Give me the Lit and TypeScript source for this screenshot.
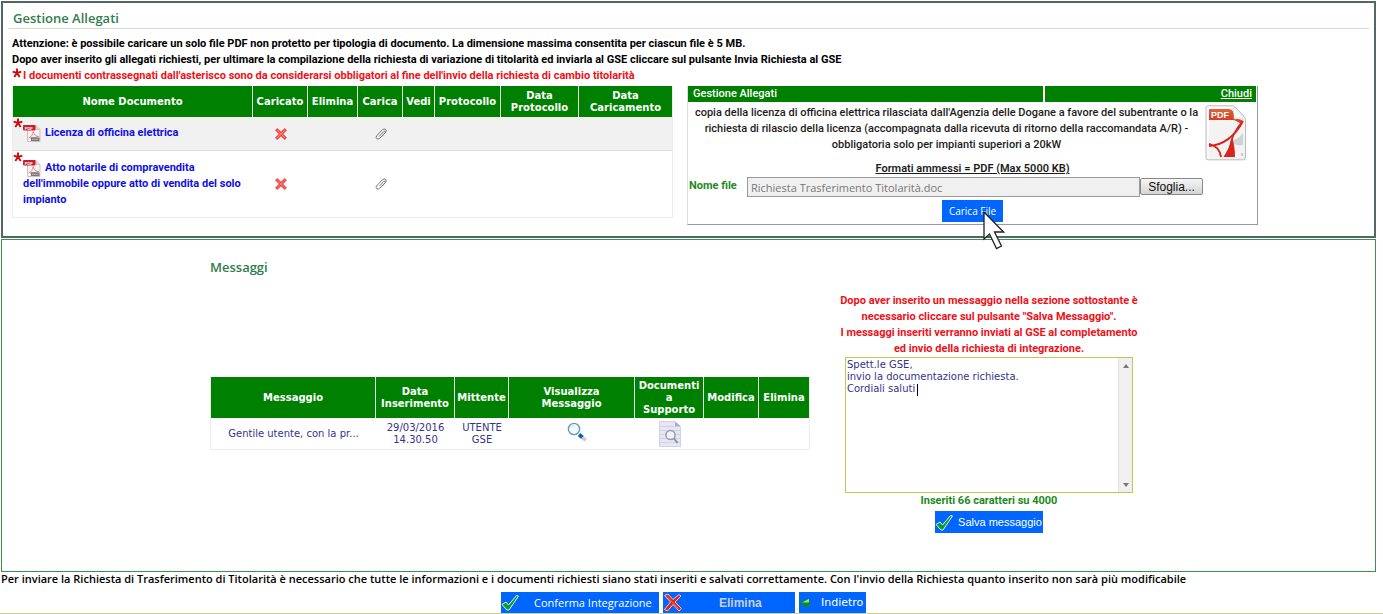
import { LitElement, html, css, svg } from "lit";
import { customElement, property, state } from "lit/decorators.js";

interface Documento {
  nome: string;
}

const star = html`<svg class="star" width="10" height="10" viewBox="0 0 10 10" role="img" aria-label="obbligatorio">
  <path d="M5 5V.5M5 5L.7 3.700M5 5L9.300 3.700M5 5L2.300 9M5 5L7.700 9" stroke="#cc0a0a" stroke-width="1.900" fill="none" />
</svg>`;

const pdfSmall = html`<svg class="pdf" width="18" height="18" viewBox="0 0 18 18" aria-hidden="true">
  <path d="M4.500 1.500h8.500l4 4v12h-12.500z" fill="#f7f3f3" stroke="#c9c4c4" />
  <path d="M13 1.500v4h4" fill="#ddd" stroke="#bbb" stroke-width=".7" />
  <rect x="0" y="1" width="12.500" height="5.500" rx="1" fill="#c8202a" />
  <text x="1.800" y="5.600" class="pdf-s">PDF</text>
  <path d="M5.500 14c3-1 4.500-4 4.600-6.500c1 3.500 3 5 6 5.200M7 14l8-1" fill="none" stroke="#e0868a" stroke-width="1" />
  <rect x="8" y="13.500" width="8.500" height="3.500" fill="#777" />
  <path d="M9 15.300h6.500" stroke="#ccc" stroke-width="1" stroke-dasharray="1.500 .6" />
</svg>`;

const pdfLarge = html`<svg width="42" height="56" viewBox="0 0 42 56" aria-hidden="true">
  <defs>
    <linearGradient id="pg" x1="0" y1="0" x2="1" y2="1">
      <stop offset="0" stop-color="#fff" /><stop offset="1" stop-color="#eee" />
    </linearGradient>
    <linearGradient id="pr" x1="0" y1="0" x2="0" y2="1">
      <stop offset="0" stop-color="#e2623f" /><stop offset="1" stop-color="#d3401f" />
    </linearGradient>
  </defs>
  <path d="M3 .8h24.500c3 1 11.500 9.500 13 13.500v38.500q0 2-2 2H3q-2 0-2-2V2.800q0-2 2-2z" fill="url(#pg)" stroke="#b9bcbc" />
  <path d="M4 15h26l8 1v36H4z" fill="#f3f3f3" />
  <path d="M24 36c5 4 10 5 14 4V28c-5 6-9 8-14 8z" fill="#cfd2d6" />
  <path d="M4 4h19q5 0 6 5l1 6H4z" fill="url(#pr)" />
  <path d="M28 3c1 5 1 8 1 11c3-2 6-1 9.500 1C37 10 31 4 28 3z" fill="#fff" stroke="#ccc" stroke-width=".6" />
  <path d="M29 15c3-2 6-1 9 1l-2 3-3-2z" fill="#d8432a" />
  <text x="6" y="13" class="pdf-l">PDF</text>
  <path d="M4 41c16-1 26-10 34-25M4 39c8 2 11 6 12 13" fill="none" stroke="#d8231f" stroke-width="2" />
  <path d="M27 32C29 38 30 45 30 52H18.500C23 45 25 40 27 32z" fill="#d8231f" />
  <path d="M37 17C28 27 26 36 25 42" fill="none" stroke="#d8231f" stroke-width="1.500" />
  <path d="M37 48v3" stroke="#e88" stroke-width="1" />
</svg>`;

const cross = html`<svg width="12" height="12" viewBox="0 0 12 12" role="img" aria-label="No">
  <path d="M2.200 0L6 3.600L9.800 0L12 2.200L8.300 6L12 9.800L9.800 12L6 8.400L2.200 12L0 9.800L3.700 6L0 2.200z" fill="#f0504c" />
  <path d="M2.300 2.300l7.400 7.400M9.700 2.300l-7.400 7.400" stroke="#f67b76" stroke-width="1" />
</svg>`;

const clip = html`<svg width="12" height="12" viewBox="0 0 12 12" aria-hidden="true">
  <path d="M4.300 8.300L8.600 3.600q.9-.8 1.500-.2q.6.700-.2 1.600L4.700 10.300q-1.500 1.300-2.900.4q-1.400-1.300-.2-2.800L7.400 1.700q1.700-1.500 3.300-.3q1.200 1.500-.2 3.100L6.500 8.800" fill="none" stroke="#777" stroke-width="1" />
</svg>`;

const lens = html`<svg width="20" height="20" viewBox="0 0 20 20" aria-hidden="true">
  <path d="M12 12.500l3.500 3" stroke="#0f67a8" stroke-width="4" />
  <path d="M15.500 15.500l3 2.700" stroke="#c9bfe6" stroke-width="3.500" />
  <circle cx="7" cy="7" r="5.600" fill="#f4fbfe" stroke="#5f9cb8" stroke-width="1.400" />
  <path d="M3.500 6q1-3 4-3" stroke="#b8dcea" fill="none" />
</svg>`;

const docLens = html`<svg width="22" height="26" viewBox="0 0 22 26" aria-hidden="true">
  <path d="M.5.500h15.500l5.500 5v20H.5z" fill="#e6e7f3" stroke="#d2d3e2" />
  <path d="M16 .5v5h5.500z" fill="#a9abc0" />
  <path d="M1 5.500h14M1 9.500h20M1 13.500h20M1 17.500h20M1 21.500h20" stroke="#cfd1e6" />
  <circle cx="11.500" cy="14" r="4.600" fill="#f1f1f6" stroke="#999aa5" stroke-width="1.500" />
  <path d="M15 17.500l3.500 4.500" stroke="#8d8e99" stroke-width="2" />
</svg>`;

const check = html`<svg width="18" height="17" viewBox="0 0 18 17" aria-hidden="true">
  <path d="M1 10.500l4-2.500l2.500 3L15.500 1.500l2 .5L8 16H6z" fill="#0c9a35" stroke="#d8f5dc" stroke-width="1" />
</svg>`;

const redX = html`<svg width="20" height="19" viewBox="0 0 20 19" aria-hidden="true">
  <path d="M1.500 2.500L5 1l5 5.500L16 1.500l2 1.500l-6 6l6.500 6.500L16 18l-6-6.500L4.500 18l-3-1.500L7.500 9z" fill="#d8251d" stroke="#f8c4be" stroke-width="1" />
  <path d="M4 3.500l11.500 12" stroke="#f3695d" stroke-width="1" />
</svg>`;

const backArrow = html`<svg width="11" height="12" viewBox="0 0 11 12" aria-hidden="true">
  <path d="M10.500 1v10L.5 6.500v-1z" fill="#14852b" />
  <path d="M10 1.800L3 5.500h7z" fill="#8fdf7a" />
</svg>`;

const pointer = html`<svg class="pointer" width="22" height="39" viewBox="0 0 22 39" aria-hidden="true">
  <path d="M1 1v27l5.500-5l7 14.500l5-2.500l-7-14h9z" fill="#fff" stroke="#222" stroke-width="1.300" />
</svg>`;

const shared = css`
  * { box-sizing: border-box; }
  table { border-collapse: separate; border-spacing: 0; table-layout: fixed; width: 100%;
    font: 10px/12px "DejaVu Sans", Verdana, sans-serif; border: 1px solid #ececec; border-top: 0; }
  th { background: #008000; color: #fff; font-weight: bold; padding: 0; border-right: 1px solid #e4f3e4; }
  th:last-child { border-right: 0; }
  td { padding: 0; text-align: center; }
  svg { display: block; }
  .icon { display: inline-flex; border: 0; background: none; padding: 0; vertical-align: middle; }
  h2 { margin: 0; font: 600 13px/18px "Open Sans", "Trebuchet MS", sans-serif; color: #2f7d4a; }
  .blue { display: inline-flex; align-items: center; background: #0066ff; color: #fff; border: 0; padding: 0; white-space: nowrap; }
`;

@customElement("tabella-documenti")
export class TabellaDocumenti extends LitElement {
  @property({ attribute: false }) documenti: Documento[] = [];

  static styles = [shared, css`
    :host { display: block; }
    .c55 { width: 55px; } .c50 { width: 50px; } .c45 { width: 45px; } .c32 { width: 32px; }
    .c66 { width: 66px; } .c78 { width: 78px; } .c93 { width: 93px; }
    th { height: 31px; }
    td { height: 34px; }
    tr:first-child td { background: #f1f1f1; border-bottom: 1px solid #ddd; }
    tr:last-child td { height: 66px; }
    .name { position: relative; text-align: left; padding: 8px 0 9px 10px; color: #1010e6;
      font: 700 11px/16px Roboto, "Trebuchet MS", sans-serif; }
    .name a { color: inherit; text-decoration: none; }
    .star { position: absolute; left: 0; top: 1px; }
    .pdf { display: inline-block; vertical-align: middle; margin: -2px 4px -2px 0; }
    .pdf-s { font: bold 4px "Liberation Sans", sans-serif; fill: #fff; }
  `];

  render() {
    return html`<table>
      <colgroup><col /><col class="c55" /><col class="c50" /><col class="c45" /><col class="c32" /><col class="c66" /><col class="c78" /><col class="c93" /></colgroup>
      <thead><tr>
        <th>Nome Documento</th><th>Caricato</th><th>Elimina</th><th>Carica</th><th>Vedi</th><th>Protocollo</th>
        <th>Data<br />Protocollo</th><th>Data<br />Caricamento</th>
      </tr></thead>
      <tbody>${this.documenti.map((d) => html`<tr>
        <td class="name">${star}${pdfSmall}<a href="#">${d.nome}</a></td>
        <td><span class="icon">${cross}</span></td><td></td>
        <td><button class="icon" aria-label="Carica">${clip}</button></td>
        <td></td><td></td><td></td><td></td>
      </tr>`)}</tbody>
    </table>`;
  }
}

@customElement("carica-allegato")
export class CaricaAllegato extends LitElement {
  static styles = [shared, css`
    :host { display: block; font: 500 11px/16px Roboto, "Trebuchet MS", sans-serif; color: #1c1c1c; }
    .box { position: relative; border: 1px solid #999; border-left-color: #ddd; border-top: 0; padding-bottom: 2px; }
    .bar { display: grid; grid-template-columns: 356fr 212fr; gap: 2px; margin-right: 1px; color: #fff; }
    .bar > * { background: #008000; padding: 0 5px; }
    .bar > :last-child { text-align: right; padding-right: 4px; }
    .bar a { color: #fff; }
    .desc { display: grid; grid-template-columns: 1fr 52px; margin-top: 3px; }
    .desc p { margin: 0; text-align: center; }
    .formats { text-align: center; font-weight: 600; text-decoration: underline; }
    .file { display: grid; grid-template-columns: 59px 393px 63px; align-items: start; }
    label { color: #1d8a1d; font-weight: 700; padding: 1px 0 0 1px; }
    input { height: 20px; min-width: 0; border: 1px solid #999; background: #f0f0f0; color: #777; padding: 0 3px;
      font: 11px/16px "Open Sans", Tahoma, sans-serif; }
    .browse { height: 17px; margin-top: 1px; border: 1px solid #888; border-radius: 2px; padding: 0;
      background: linear-gradient(#f6f6f6, #d4d4d4); color: #111; font: 12px/14px "Liberation Sans", Arial, sans-serif; }
    .send { display: flex; justify-content: center; margin-top: 3px; }
    .send button { height: 22px; padding: 0 7px; font: 10px/16px "Open Sans", sans-serif; }
    .pdf-l { font: bold 9px "Liberation Sans", sans-serif; fill: #fff; }
    .pointer { position: absolute; left: 295px; top: 125px; }
  `];

  render() {
    return html`<section class="box">
      <div class="bar"><span>Gestione Allegati</span><span><a href="#">Chiudi</a></span></div>
      <div class="desc">
        <p>copia della licenza di officina elettrica rilasciata dall'Agenzia delle Dogane a favore del subentrante o la<br />
        richiesta di rilascio della licenza (accompagnata dalla ricevuta di ritorno della raccomandata A/R) -<br />
        obbligatoria solo per impianti superiori a 20kW</p>
        ${pdfLarge}
      </div>
      <div class="formats">Formati ammessi = PDF (Max 5000 KB)</div>
      <div class="file">
        <label for="nome">Nome file</label>
        <input id="nome" type="text" readonly value="Richiesta Trasferimento Titolarità.doc" />
        <button class="browse">Sfoglia...</button>
      </div>
      <div class="send"><button class="blue">Carica File</button></div>
      ${pointer}
    </section>`;
  }
}

@customElement("pannello-messaggi")
export class PannelloMessaggi extends LitElement {
  @state() private testo = "Spett.le GSE,\ninvio la documentazione richiesta.\nCordiali saluti";

  static styles = [shared, css`
    :host { display: grid; grid-template-columns: 600px 304px; gap: 27px; padding: 18px 0 38px 208px; }
    h2 { margin-bottom: 101px; }
    .c165 { width: 165px; } .c79 { width: 79px; } .c54 { width: 54px; } .c126 { width: 126px; }
    .c69 { width: 69px; } .c55 { width: 55px; }
    th { height: 41px; }
    td { height: 31px; color: #34348a; }
    .view { padding: 0 0 3px 10px; }
    .compose { display: flex; flex-direction: column; align-items: center; padding-top: 35px;
      font: 700 11px/16px Roboto, "Trebuchet MS", sans-serif; }
    .note { margin: 0; text-align: center; color: #f01018; white-space: nowrap; }
    .editor { position: relative; display: flex; width: 288px; height: 136px; border: 1px solid #c5c552; }
    textarea { flex: 1; border: 0; outline: 0; resize: none; overflow: hidden; padding: 1px; color: #34348a;
      font: 10px/12px "DejaVu Sans", Verdana, sans-serif; background: #fff; }
    .caret { position: absolute; left: 71px; top: 26px; width: 1px; height: 12px; background: #000; }
    .scroll { display: flex; flex-direction: column; justify-content: space-between; align-items: center; width: 14px;
      padding: 6px 0 5px; background: #f0f0f0; border-left: 1px solid #e2e2e2; }
    .count { color: #1d8a1d; }
    .save { height: 22px; padding-right: 1px; margin-top: 2px; font: 11px/16px "Liberation Sans", Arial, sans-serif; gap: 5px; }
  `];

  private scrive(e: Event) {
    this.testo = (e.target as HTMLTextAreaElement).value;
  }

  render() {
    const arrow = (d: string) => html`<svg width="6" height="4" viewBox="0 0 6 4" aria-hidden="true">${svg`<path d=${d} fill="#777"/>`}</svg>`;
    return html`
      <div>
        <h2>Messaggi</h2>
        <table>
          <colgroup><col class="c165" /><col class="c79" /><col class="c54" /><col class="c126" /><col class="c69" /><col class="c55" /><col /></colgroup>
          <thead><tr>
            <th>Messaggio</th><th>Data<br />Inserimento</th><th>Mittente</th><th>Visualizza<br />Messaggio</th>
            <th>Documenti<br />a<br />Supporto</th><th>Modifica</th><th>Elimina</th>
          </tr></thead>
          <tbody><tr>
            <td>Gentile utente, con la pr...</td><td>29/03/2016<br />14.30.50</td><td>UTENTE<br />GSE</td>
            <td class="view"><button class="icon" aria-label="Visualizza messaggio">${lens}</button></td>
            <td><button class="icon" aria-label="Documenti a supporto">${docLens}</button></td><td></td><td></td>
          </tr></tbody>
        </table>
      </div>
      <div class="compose">
        <p class="note">Dopo aver inserito un messaggio nella sezione sottostante è<br />
          necessario cliccare sul pulsante "Salva Messaggio".<br />
          I messaggi inseriti verranno inviati al GSE al completamento<br />
          ed invio della richiesta di integrazione.</p>
        <div class="editor">
          <textarea aria-label="Messaggio" spellcheck="false" .value=${this.testo} @input=${this.scrive}></textarea>
          <span class="caret"></span>
          <span class="scroll">${arrow("M0 4L3 0L6 4z")}${arrow("M0 0L3 4L6 0z")}</span>
        </div>
        <span class="count">Inseriti 66 caratteri su 4000</span>
        <button class="blue save">${check}Salva messaggio</button>
      </div>`;
  }
}

@customElement("app-root")
export class AppRoot extends LitElement {
  private documenti: Documento[] = [
    { nome: "Licenza di officina elettrica" },
    { nome: "Atto notarile di compravendita dell'immobile oppure atto di vendita del solo impianto" },
  ];

  static styles = [shared, css`
    :host { display: block; background: #fff; color: #000; padding-top: 1px; border-bottom: 1px solid #cfd08a;
      font: 700 11px/16px Roboto, "Trebuchet MS", sans-serif; }
    .panel { margin: 0 7px 0 1px; }
    .attach { border: 2px solid #566; padding: 6px 5px 11px; }
    .attach h2 { padding: 0 5px 1px; border-bottom: 1px solid #cfdccf; }
    .intro { margin: 7px 0 2px; padding: 0 4px; }
    .intro p { margin: 0; }
    .req { color: #f01018; display: flex; gap: 1px; }
    .cols { display: grid; grid-template-columns: minmax(0, 661fr) minmax(0, 571fr) minmax(0, 97fr); gap: 14px;
      padding-left: 4px; align-items: start; }
    .messages { border: 1px solid #3f9150; margin-top: 1px; min-height: 333px; }
    .warn { margin: 0; padding: 0 1px; font: 600 11px/14px "Open Sans", Tahoma, sans-serif; }
    .actions { display: flex; justify-content: center; gap: 4px; margin-top: 6px; padding-right: 16px; }
    .actions button { height: 21px; }
    .ok { width: 158px; gap: 15px; font: 11px/16px "Open Sans", sans-serif; }
    .del { width: 132px; gap: 36px; font: bold 12px/16px "Liberation Sans", Arial, sans-serif; color: #c9ced8; }
    .back { width: 67px; gap: 11px; font: 11px/16px "DejaVu Sans", Verdana, sans-serif; }
  `];

  render() {
    return html`
      <section class="panel attach">
        <h2>Gestione Allegati</h2>
        <div class="intro">
          <p>Attenzione: è possibile caricare un solo file PDF non protetto per tipologia di documento. La dimensione massima consentita per ciascun file è 5 MB.</p>
          <p>Dopo aver inserito gli allegati richiesti, per ultimare la compilazione della richiesta di variazione di titolarità ed inviarla al GSE cliccare sul pulsante Invia Richiesta al GSE</p>
          <p class="req">${star}I documenti contrassegnati dall'asterisco sono da considerarsi obbligatori al fine dell'invio della richiesta di cambio titolarità</p>
        </div>
        <div class="cols">
          <tabella-documenti .documenti=${this.documenti}></tabella-documenti>
          <carica-allegato></carica-allegato>
        </div>
      </section>
      <section class="panel messages"><pannello-messaggi></pannello-messaggi></section>
      <p class="warn">Per inviare la Richiesta di Trasferimento di Titolarità è necessario che tutte le informazioni e i documenti richiesti siano stati inseriti e salvati correttamente. Con l'invio della Richiesta quanto inserito non sarà più modificabile</p>
      <div class="actions">
        <button class="blue ok">${check}Conferma Integrazione</button>
        <button class="blue del">${redX}Elimina</button>
        <button class="blue back">${backArrow}Indietro</button>
      </div>`;
  }
}
